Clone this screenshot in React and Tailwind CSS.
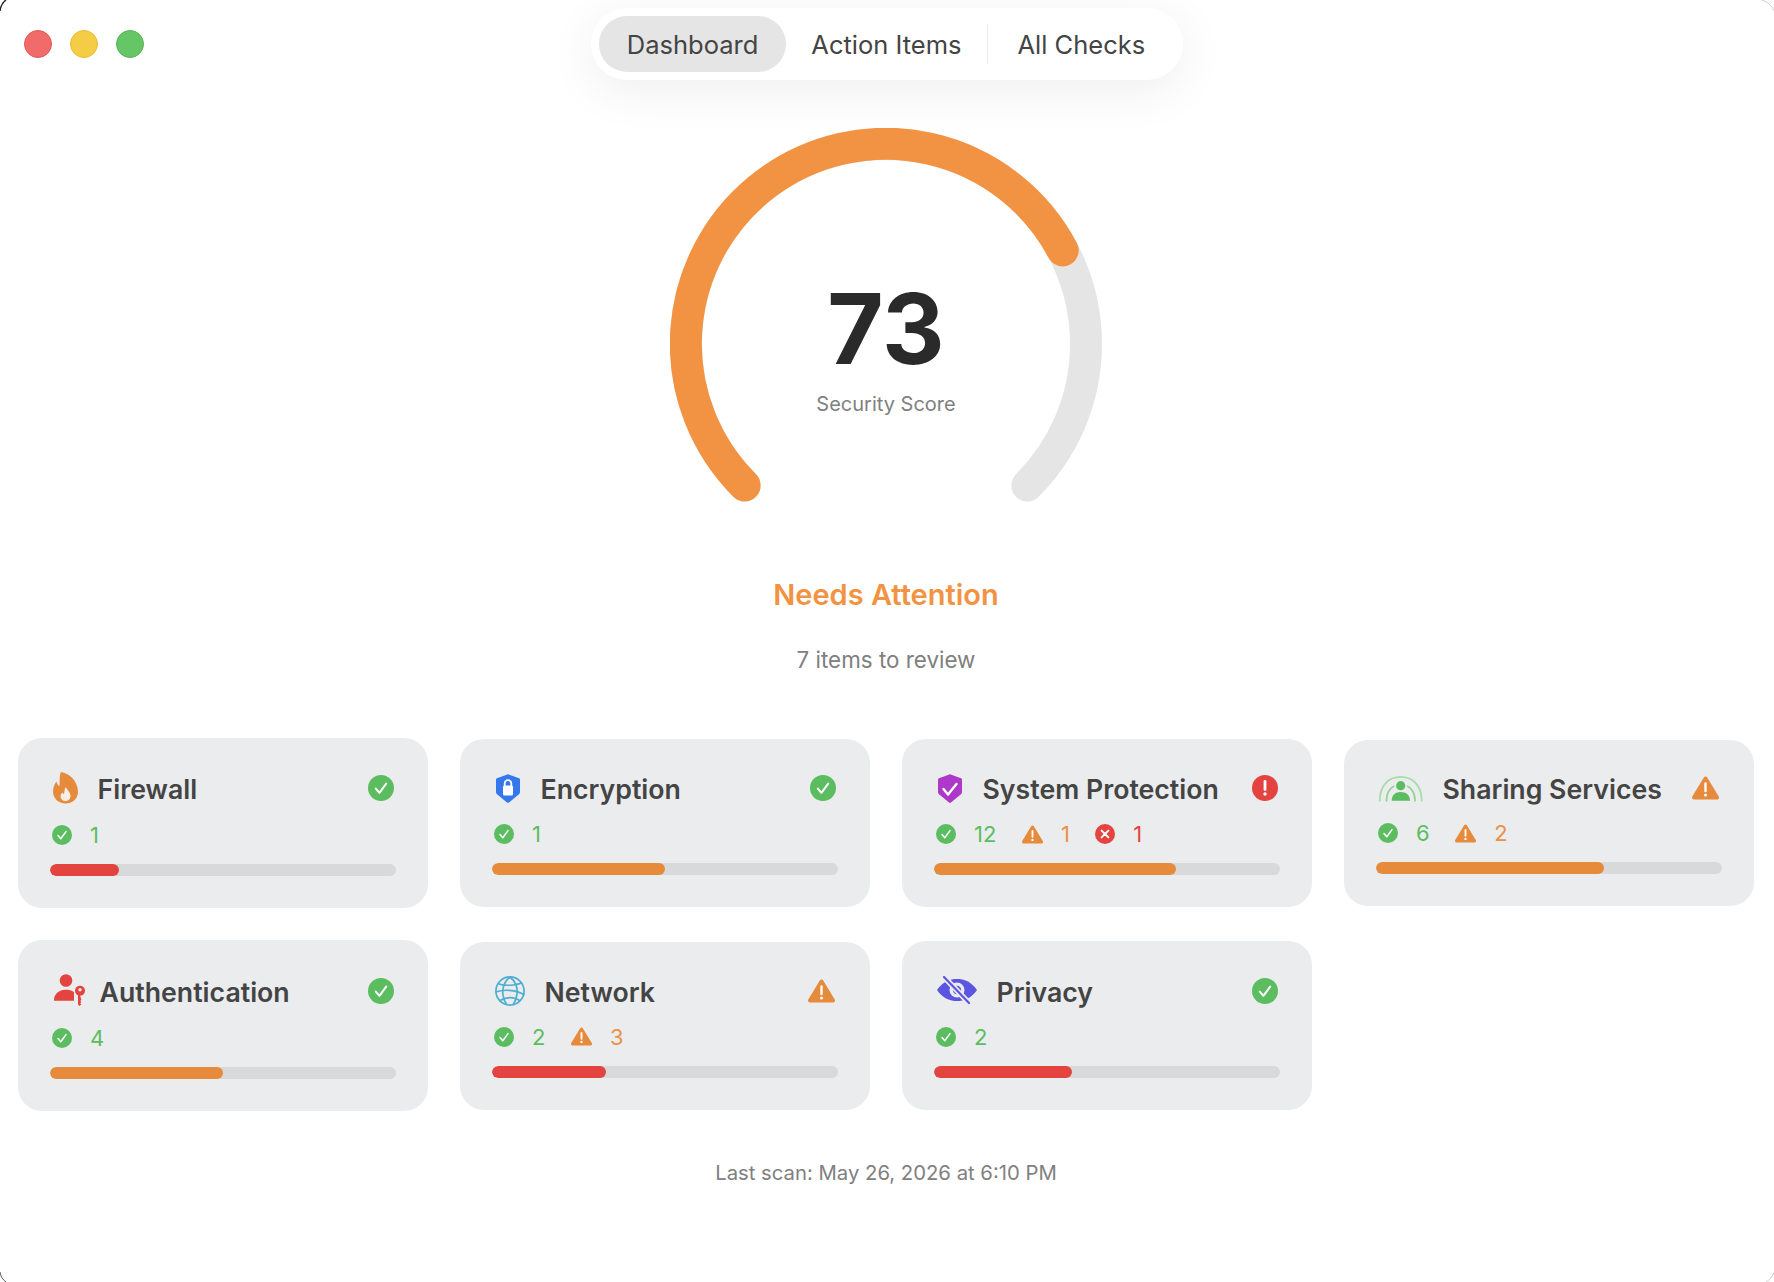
const GREEN = '#5BBD5F';
const ORANGE = '#E68A3C';
const RED = '#E3443F';

const CheckBadge = ({ size = 26 }) => (
  <svg width={size} height={size} viewBox="0 0 26 26" className="shrink-0">
    <circle cx="13" cy="13" r="13" fill={GREEN} />
    <path d="M7.8 13.6l3.6 4.2 6.8-9.2" fill="none" stroke="#fff" strokeWidth="2" strokeLinecap="round" strokeLinejoin="round" />
  </svg>
);

const WarnBadge = ({ w = 27, h = 24 }) => (
  <svg width={w} height={h} viewBox="0 0 27 24" className="shrink-0">
    <path d="M13.5 2.5L25 21.5H2z" fill={ORANGE} stroke={ORANGE} strokeWidth="4" strokeLinejoin="round" />
    <path d="M13.5 7.5v7.5" stroke="#fff" strokeWidth="2.4" strokeLinecap="round" />
    <circle cx="13.5" cy="19" r="1.5" fill="#fff" />
  </svg>
);

const ErrorBadge = () => (
  <svg width="26" height="26" viewBox="0 0 26 26" className="shrink-0">
    <circle cx="13" cy="13" r="13" fill={RED} />
    <path d="M13 6.5v8" stroke="#fff" strokeWidth="2.8" strokeLinecap="round" />
    <circle cx="13" cy="19" r="1.7" fill="#fff" />
  </svg>
);

const CrossBadge = () => (
  <svg width="20" height="20" viewBox="0 0 20 20" className="shrink-0">
    <circle cx="10" cy="10" r="10" fill={RED} />
    <path d="M6.6 6.6l6.8 6.8M13.4 6.6l-6.8 6.8" stroke="#fff" strokeWidth="2" strokeLinecap="round" />
  </svg>
);

const FlameIcon = () => (
  <svg width="28" height="36" viewBox="0 0 28 36" className="shrink-0 overflow-visible">
    <path d="M10.8 2C19 3 28 11 28 22c0 7-6 11.5-12.500 11.500C8.500 33.500 3 28.500 3 21.500c0-4 1.500-7.500 3.500-10 .5 2.500 1.500 4 3 4.500.5-5-.5-9 1.300-14z" fill={ORANGE} />
    <path d="M15.500 17c1.500 3 5 5 5 9 0 3-2.500 5-5 5s-5-2-5-4.500c0-2 1-3 2-4 .5 1 1 1.500 1.500 1.500.5-2 .5-5 1.500-7z" fill="#F7EFE7" />
  </svg>
);

const Shield = ({ color, children }) => (
  <svg width="29" height="34" viewBox="0 0 29 34" className="shrink-0">
    <path d="M16 3.200l11 4c.6.2 1 .8 1 1.400V21c0 1-.5 1.800-1.300 2.400L17 31.400c-.6.6-1.500.6-2 0L5.300 23.400C4.500 22.800 4 22 4 21V8.600c0-.6.4-1.200 1-1.400z" fill={color} />
    {children}
  </svg>
);

const LockShield = () => (
  <Shield color="#3577EC">
    <rect x="11" y="14.500" width="10" height="10" rx="1.500" fill="#fff" />
    <path d="M12.700 15v-2.500a3.300 3.300 0 0 1 6.600 0V15" fill="none" stroke="#fff" strokeWidth="1.800" />
  </Shield>
);

const CheckShield = () => (
  <Shield color="#AE38C8">
    <path d="M9.500 18l4.500 5.500 8.500-10.500" fill="none" stroke="#fff" strokeWidth="2.400" strokeLinecap="round" strokeLinejoin="round" />
  </Shield>
);

const SharingIcon = () => (
  <svg width="47" height="32" viewBox="0 0 47 32" className="shrink-0">
    <path d="M3.700 28.800C3.700 14 12 4.900 24.700 4.900s21 9.100 21 23.900" fill="none" stroke="#A7DDA9" strokeWidth="1.800" strokeLinecap="round" />
    <path d="M10.500 28.800C10.500 19 16 12.600 24.700 12.600S39 19 39 28.800" fill="none" stroke="#8FD492" strokeWidth="1.800" strokeLinecap="round" />
    <circle cx="24.700" cy="13.700" r="6.600" fill="#EBECEE" />
    <circle cx="24.700" cy="13.700" r="4.600" fill={GREEN} />
    <path d="M15.700 28.800c0-5.500 3.500-8.800 9-8.800s9.300 3.300 9.300 8.800z" fill={GREEN} />
  </svg>
);

const AuthIcon = () => (
  <svg width="35" height="37" viewBox="0 0 35 37" className="shrink-0 -mr-[5px]">
    <circle cx="16" cy="8.500" r="6.300" fill={RED} />
    <path d="M4 28.700c-.4-6 4.500-11 11-11h2c3 0 5.500 1 7 2.500v8.500z" fill={RED} />
    <path d="M30 23h-2v9.500l1.500 1.500 1.800-1.500-1-1.200 1-1.200-1-1.200 1-1.200z" fill={RED} />
    <circle cx="30" cy="18.700" r="5" fill={RED} />
    <circle cx="30" cy="17.800" r="1.700" fill="#EBECEE" />
  </svg>
);

const GlobeIcon = () => (
  <svg width="33" height="34" viewBox="0 0 33 34" fill="none" stroke="#4FAED1" strokeWidth="1.700" className="shrink-0">
    <circle cx="18" cy="17" r="14.100" />
    <path d="M18 3C12 8 10 14 11 21c.5 4 2 7.500 4 10" />
    <path d="M18 3c5 4 8 10 7 17-.5 5-2 8-4 11" />
    <path d="M6 9.500c5 2.500 18 2.500 24-1" />
    <path d="M3.700 18c6.300-2.500 20.300-3 28.800 3" />
    <path d="M7 27c6-4 15-5 21 0" />
  </svg>
);

const EyeOffIcon = () => (
  <svg width="43" height="35" viewBox="0 0 43 35" fill="none" className="shrink-0">
    <path d="M3 17c6-8.500 13-11 20-11s14 2.500 20 11c-6 8.500-13 11-20 11S9 25.500 3 17z" fill="#5B55E0" />
    <circle cx="23" cy="17" r="7.500" fill="#EBECEE" />
    <circle cx="23" cy="17" r="4.200" fill="#5B55E0" />
    <path d="M10 4l25 26" stroke="#EBECEE" strokeWidth="5.500" />
    <path d="M10 4l25 26" stroke="#5B55E0" strokeWidth="2.200" strokeLinecap="round" />
  </svg>
);

const rows = [
  { name: 'Firewall', icon: <FlameIcon />, status: 'ok', good: 1, pct: 20, bar: 'bg-[#E3443F]' },
  { name: 'Encryption', icon: <LockShield />, status: 'ok', good: 1, pct: 50, bar: 'bg-[#E68A3C]' },
  { name: 'System Protection', icon: <CheckShield />, status: 'error', good: 12, warn: 1, bad: 1, pct: 70, bar: 'bg-[#E68A3C]' },
  { name: 'Sharing Services', icon: <SharingIcon />, status: 'warn', good: 6, warn: 2, pct: 66, bar: 'bg-[#E68A3C]' },
  { name: 'Authentication', icon: <AuthIcon />, status: 'ok', good: 4, pct: 50, bar: 'bg-[#E68A3C]' },
  { name: 'Network', icon: <GlobeIcon />, status: 'warn', good: 2, warn: 3, pct: 33, bar: 'bg-[#E3443F]' },
  { name: 'Privacy', icon: <EyeOffIcon />, status: 'ok', good: 2, pct: 40, bar: 'bg-[#E3443F]' },
];

const Card = ({ card }) => (
  <div className="flex flex-col gap-[19px] rounded-[24px] bg-[#EBECEE] p-[32px]">
    <div className="flex items-center gap-[19.5px]">
      {card.icon}
      <span className="flex-1 pt-[2px] text-[26.7px] leading-[30px] font-semibold text-[#444444]">{card.name}</span>
      <div className={card.status === 'warn' ? 'mr-[3px]' : 'mr-[2px]'}>
        {card.status === 'ok' && <CheckBadge />}
        {card.status === 'warn' && <WarnBadge />}
        {card.status === 'error' && <ErrorBadge />}
      </div>
    </div>
    <div className="flex h-[20px] items-center gap-[25.5px] pl-[2px] text-[22px] leading-none">
      <div className="flex items-center gap-[18px] text-[#5BBD5F]">
        <CheckBadge size={20} />
        <span>{card.good}</span>
      </div>
      {card.warn && (
        <div className="flex items-center gap-[18px] text-[#EC9147]">
          <WarnBadge w={21} h={19} />
          <span>{card.warn}</span>
        </div>
      )}
      {card.bad && (
        <div className="flex items-center gap-[18px] text-[#E3443F]">
          <CrossBadge />
          <span>{card.bad}</span>
        </div>
      )}
    </div>
    <div className="h-[12px] overflow-hidden rounded-full bg-[#D8D9DB]">
      <div className={`h-full rounded-full ${card.bar}`} style={{ width: `${card.pct}%` }} />
    </div>
  </div>
);

const Gauge = () => (
  <div className="relative mt-[48px] mr-[2px] h-[376px] w-[432px]">
    <svg width="432" height="376" viewBox="0 0 432 376" fill="none">
      <path d="M74.600 357.400A200 200 0 1 1 357.400 357.400" stroke="#E5E5E5" strokeWidth="32" strokeLinecap="round" />
      <path d="M74.600 357.400A200 200 0 1 1 392.700 122.400" stroke="#F29343" strokeWidth="32" strokeLinecap="round" />
    </svg>
    <div className="absolute inset-x-0 top-[142px] flex flex-col items-center">
      <span className="text-[97px] leading-[118px] font-bold text-[#2A2A2A]">73</span>
      <span className="mt-[3px] text-[20px] leading-[26px] text-[#808080]">Security Score</span>
    </div>
  </div>
);

const App = () => {
  return (
    <div className="relative flex min-h-[1282px] flex-col items-center overflow-hidden bg-white [font-family:Inter,sans-serif]">
      {/* window corners */}
      <svg width="8" height="12" viewBox="0 0 8 12" fill="none" className="absolute top-0 left-0">
        <path d="M0 11C.5 6 2.500 2.500 6 0" stroke="#222222" strokeWidth="1.500" />
      </svg>
      <svg width="14" height="12" viewBox="0 0 14 12" fill="none" className="absolute top-0 right-0">
        <path d="M14 11C12 6 8 2 2 0" stroke="#CFCFCF" />
      </svg>
      <svg width="8" height="10" viewBox="0 0 8 10" fill="none" className="absolute bottom-0 left-0">
        <path d="M0 0C.5 4 2.500 7.500 6 10" stroke="#555555" />
      </svg>
      <svg width="10" height="10" viewBox="0 0 10 10" fill="none" className="absolute right-0 bottom-0">
        <path d="M10 0C9 4 6 8 2 10" stroke="#CFCFCF" />
      </svg>

      <div className="grid w-full grid-cols-[1fr_auto_1fr] items-center pt-[8px]">
        <div className="flex gap-[18px] pl-[24px]">
          <div className="size-[28px] rounded-full border border-[#E25555] bg-[#F26B6B]" />
          <div className="size-[28px] rounded-full border border-[#E8BC32] bg-[#F5CC45]" />
          <div className="size-[28px] rounded-full border border-[#55B555] bg-[#66C666]" />
        </div>
        <div className="flex h-[72px] items-center rounded-[36px] bg-white p-[8px] text-[25.5px] text-[#444444] shadow-[0_10px_50px_rgba(0,0,0,0.07)]">
          <div className="flex h-[56px] items-center rounded-[28px] bg-[#E5E5E5] px-[28px] pt-[2px]">Dashboard</div>
          <div className="px-[25px] pt-[2px]">Action Items</div>
          <div className="h-[40px] w-px bg-[#EBEBEB]" />
          <div className="px-[30px] pt-[2px]">All Checks</div>
        </div>
        <div />
      </div>

      <Gauge />

      <div className="mt-[73px] mr-[2px] text-[29px] leading-[36px] font-semibold text-[#F29343]">Needs Attention</div>
      <div className="mt-[33px] mr-[2px] text-[22.4px] leading-[28px] text-[#808080]">7 items to review</div>

      <div className="mt-[64px] grid w-full grid-cols-4 items-center gap-[32px] pr-[20px] pl-[18px]">
        {rows.map((card) => (
          <Card key={card.name} card={card} />
        ))}
      </div>

      <div className="mt-[48px] mr-[2px] text-[20.3px] leading-[28px] text-[#808080]">Last scan: May 26, 2026 at 6:10 PM</div>
    </div>
  );
};

export default App;
